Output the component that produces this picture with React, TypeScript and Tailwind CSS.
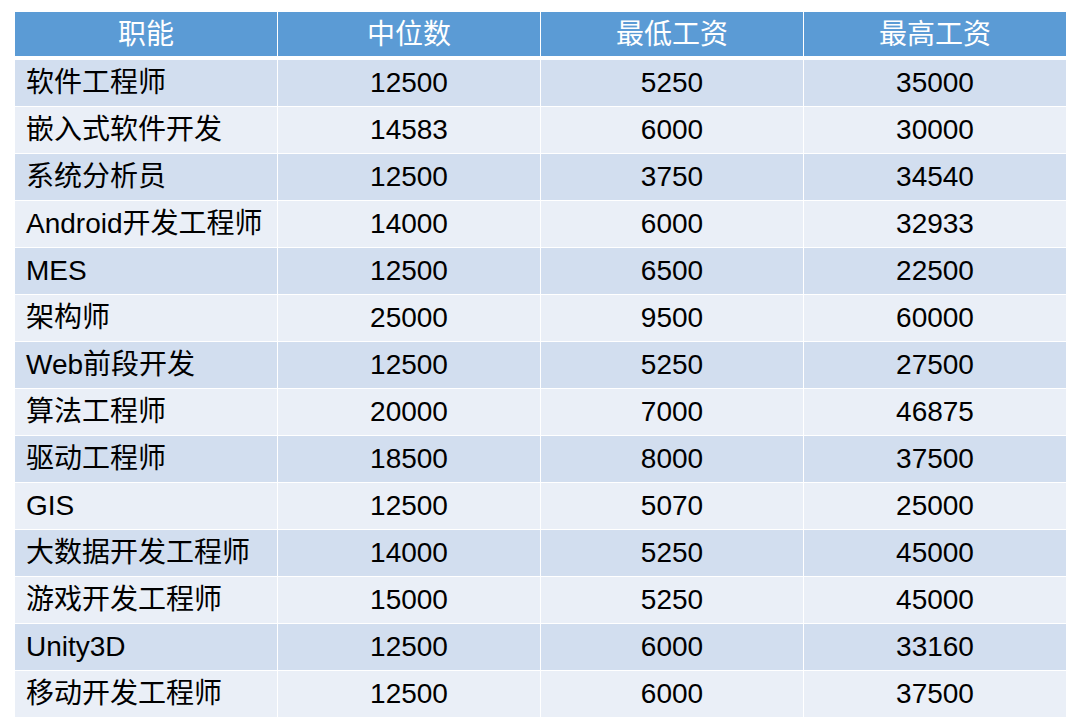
import React from 'react';

const rows: [string, string, string, string][] = [
  ['软件工程师', '12500', '5250', '35000'],
  ['嵌入式软件开发', '14583', '6000', '30000'],
  ['系统分析员', '12500', '3750', '34540'],
  ['Android开发工程师', '14000', '6000', '32933'],
  ['MES', '12500', '6500', '22500'],
  ['架构师', '25000', '9500', '60000'],
  ['Web前段开发', '12500', '5250', '27500'],
  ['算法工程师', '20000', '7000', '46875'],
  ['驱动工程师', '18500', '8000', '37500'],
  ['GIS', '12500', '5070', '25000'],
  ['大数据开发工程师', '14000', '5250', '45000'],
  ['游戏开发工程师', '15000', '5250', '45000'],
  ['Unity3D', '12500', '6000', '33160'],
  ['移动开发工程师', '12500', '6000', '37500'],
];

const headers = ['职能', '中位数', '最低工资', '最高工资'];

export default function App() {
  return (
    <div
      className="w-[1080px] h-[725px] bg-white pt-[12px] pl-[15px]"
      style={{ fontFamily: '"Liberation Sans", "Noto Sans CJK SC", sans-serif' }}
    >
      <div className="w-[1051px]">
        <div className="grid grid-cols-4 gap-x-px h-[44px]">
          {headers.map((h) => (
            <div key={h} className="bg-[#5b9bd5] text-white text-[28px] flex items-center justify-center pt-[2px]">
              {h}
            </div>
          ))}
        </div>
        <div className="mt-[4px] flex flex-col gap-px">
          {rows.map((r, i) => (
            <div key={r[0]} className="grid grid-cols-4 gap-x-px h-[46px] text-[28px] text-black">
              {r.map((c, j) => (
                <div
                  key={j}
                  className={`${i % 2 === 0 ? 'bg-[#d2deef]' : 'bg-[#eaeff7]'} flex items-center ${
                    j === 0 ? 'justify-start pl-[11px]' : 'justify-center'
                  }`}
                >
                  {c}
                </div>
              ))}
            </div>
          ))}
        </div>
      </div>
    </div>
  );
}
